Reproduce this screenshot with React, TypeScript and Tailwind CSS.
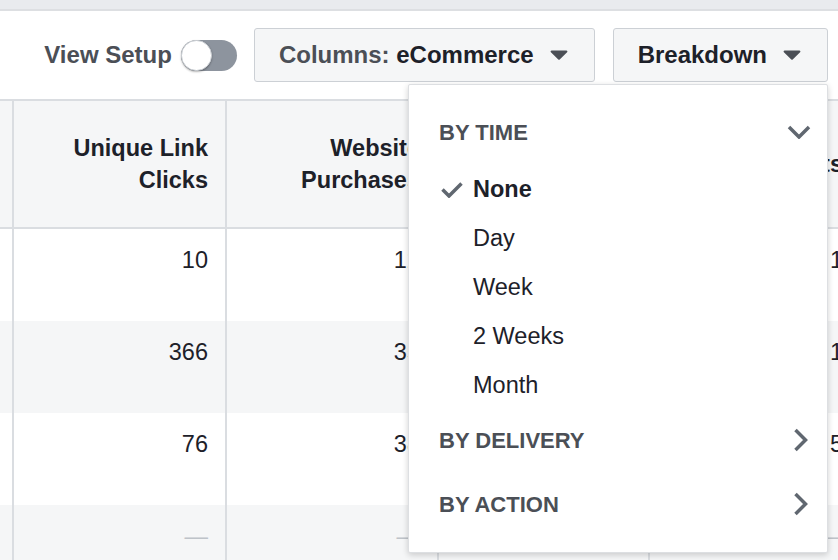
import type { ReactNode } from 'react'

type Row = { values: string[]; shaded: boolean }

const rows: Row[] = [
  { values: ['', '10', '12', '8', '1'], shaded: false },
  { values: ['', '366', '35', '24', '1'], shaded: true },
  { values: ['', '76', '38', '19', '5'], shaded: false },
  { values: ['', '—', '—', '—', '—'], shaded: true },
]

const headers: ReactNode[] = [
  '',
  <>Unique Link<br />Clicks</>,
  <>Website<br />Purchases</>,
  <>Website Adds<br />to Cart</>,
  'Checkouts',
]

// column widths match the borders in the grid (12 / 225 / 437 / 648)
const widths = ['w-[12px]', 'w-[213px]', 'w-[212px]', 'w-[211px]', 'w-[212px]']

function Caret() {
  return (
    <svg width="18" height="10" viewBox="0 0 18 10">
      <path d="M1.6 0.5h14.8a1 1 0 0 1 .7 1.7L9.7 9.4a1 1 0 0 1-1.4 0L.9 2.2A1 1 0 0 1 1.6.5z" fill="#4b4f56" />
    </svg>
  )
}

function ChevronDown() {
  return (
    <svg width="24" height="14" viewBox="0 0 24 14">
      <path d="M2 2l10 10L22 2" stroke="#606770" strokeWidth="3.5" fill="none" />
    </svg>
  )
}

function ChevronRight() {
  return (
    <svg width="16" height="24" viewBox="0 0 16 24">
      <path d="M2.5 2l10 10-10 10" stroke="#606770" strokeWidth="3.5" fill="none" />
    </svg>
  )
}

function Check() {
  return (
    <svg width="22" height="16" viewBox="0 0 22 16">
      <path d="M1.5 7.5l6.5 6.5L20.5 1.5" stroke="#606770" strokeWidth="3.5" fill="none" />
    </svg>
  )
}

function Cell({ i, children, head }: { i: number; children: ReactNode; head?: boolean }) {
  const edge = i === 0 ? '' : 'border-l-2 border-[#dadde1] pr-[17px]'
  return (
    <div
      className={`${widths[i]} ${edge} shrink-0 flex justify-end text-right leading-[32px] text-[23.5px] text-[#1d2129] ${
        head ? 'items-center font-bold' : 'items-start pt-[15px]'
      }`}
    >
      {children}
    </div>
  )
}

const timeOptions = ['None', 'Day', 'Week', '2 Weeks', 'Month']

export default function App() {
  return (
    <div className="relative h-[560px] w-[838px] overflow-hidden bg-white font-['Liberation_Sans','Arial',sans-serif]">
      <div className="h-[11px] bg-[#e9ebee] border-b-2 border-[#dddfe2]" />

      <div className="h-[88px] flex items-center justify-end pr-[10px]">
        <span className="text-[24px] font-bold text-[#4b4f56] mr-[9px]">View Setup</span>
        <div className="w-[56px] h-[31px] rounded-full bg-[#8d949e] flex items-center">
          <div className="w-[31px] h-[31px] rounded-full bg-white border border-[#ccd0d5] shadow-[0_1px_2px_rgba(0,0,0,0.3)]" />
        </div>
        <button className="ml-[17px] h-[54px] pl-[24px] pr-[26px] flex items-center gap-[16px] bg-[#f5f6f7] border border-[#ccd0d5] rounded-[3px] text-[24px] font-bold">
          <span>
            <span className="text-[#4b4f56]">Columns: </span>
            <span className="text-[#1d2129]">eCommerce</span>
          </span>
          <Caret />
        </button>
        <button className="ml-[18px] h-[54px] pl-[24px] pr-[26px] flex items-center gap-[16px] bg-[#f5f6f7] border border-[#ccd0d5] rounded-[3px] text-[24px] font-bold text-[#1d2129]">
          <span>Breakdown</span>
          <Caret />
        </button>
      </div>

      <div className="border-t-2 border-b-2 border-[#dadde1] bg-[#f5f6f7] h-[130px] flex">
        {headers.map((h, i) => (
          <Cell key={i} i={i} head>
            <span>{h}</span>
          </Cell>
        ))}
      </div>

      {rows.map((row, r) => (
        <div key={r} className={`h-[92px] flex ${row.shaded ? 'bg-[#f5f6f7]' : 'bg-white'}`}>
          {row.values.map((v, i) => (
            <Cell key={i} i={i}>
              <span className={v === '—' ? 'text-[#bec3c9]' : ''}>{v}</span>
            </Cell>
          ))}
        </div>
      ))}

      {/* breakdown menu */}
      <div className="absolute left-[408px] top-[84px] w-[420px] h-[469px] bg-white border border-[#dddfe2] rounded-[2px] shadow-[0_2px_6px_rgba(0,0,0,0.18)] pt-[23px]">
        <div className="h-[48px] flex items-center justify-between pl-[30px] pr-[16px]">
          <span className="text-[22px] font-bold text-[#4b4f56]">BY TIME</span>
          <ChevronDown />
        </div>
        <div className="mt-[9px]">
          {timeOptions.map(opt => (
            <div key={opt} className="h-[49px] flex items-center pl-[32px]">
              <span className="w-[32px] flex items-center">{opt === 'None' && <Check />}</span>
              <span className={`text-[23.5px] text-[#1d2129] ${opt === 'None' ? 'font-bold' : ''}`}>{opt}</span>
            </div>
          ))}
        </div>
        <div className="h-[60px] flex items-center justify-between pl-[30px] pr-[18px]">
          <span className="text-[22px] font-bold text-[#4b4f56]">BY DELIVERY</span>
          <ChevronRight />
        </div>
        <div className="h-[68px] flex items-center justify-between pl-[30px] pr-[18px]">
          <span className="text-[22px] font-bold text-[#4b4f56]">BY ACTION</span>
          <ChevronRight />
        </div>
      </div>
    </div>
  )
}
